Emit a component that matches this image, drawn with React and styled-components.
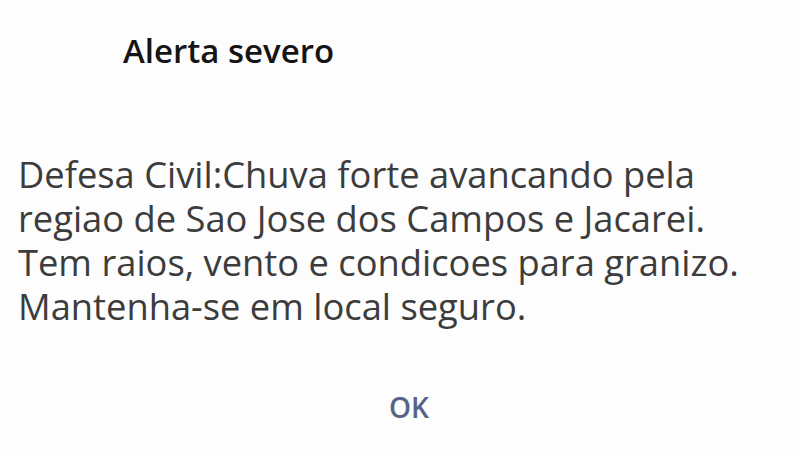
import React from "react";
import styled, { createGlobalStyle } from "styled-components";

const Global = createGlobalStyle`
  html, body { margin: 0; padding: 0; background: #fdfdfd; }
  body { font-family: "Open Sans", "Noto Sans", sans-serif; }
`;

const Dialog = styled.div`
  width: 800px;
  height: 450px;
  box-sizing: border-box;
  display: flex;
  flex-direction: column;
  background: #fdfdfd;
`;

const Title = styled.h1`
  margin: 0;
  padding: 29px 0 0 123px;
  font-size: 33px;
  font-weight: 600;
  line-height: 44px;
  color: #151515;
`;

const Message = styled.p`
  margin: 0;
  padding: 79px 0 0 18px;
  font-size: 36.3px;
  font-weight: 400;
  line-height: 44px;
  color: #3c3c3c;
`;

const Actions = styled.div`
  display: flex;
  justify-content: center;
  padding-top: 60px;
`;

const OkButton = styled.button`
  border: none;
  background: none;
  padding: 0;
  font-family: inherit;
  font-size: 28px;
  font-weight: 600;
  color: #56648a;
  margin-left: 18px;
`;

const App = () => {
  return (
    <Dialog>
      <Global />
      <Title>Alerta severo</Title>
      <Message>
        Defesa Civil:Chuva forte avancando pela
        <br />
        regiao de Sao Jose dos Campos e Jacarei.
        <br />
        Tem raios, vento e condicoes para granizo.
        <br />
        Mantenha-se em local seguro.
      </Message>
      <Actions>
        <OkButton>OK</OkButton>
      </Actions>
    </Dialog>
  );
};

export default App;
